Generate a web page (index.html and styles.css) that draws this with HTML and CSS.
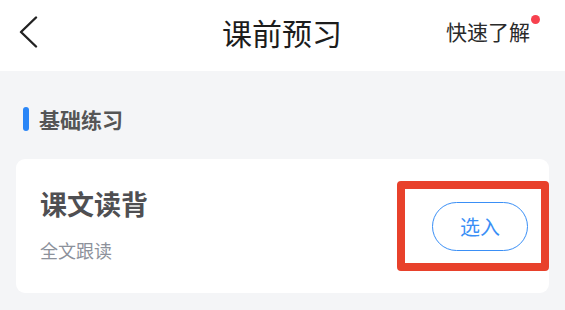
FILE: index.html
```html
<!DOCTYPE html>
<html lang="zh">
<head>
<meta charset="utf-8">
<link rel="stylesheet" href="styles.css">
</head>
<body>
<div class="page">
  <header class="nav">
    <div class="nav-back">
      <svg width="20" height="32" viewBox="0 0 20 32"><path d="M17 1.5 L2 16 L17 30.5" fill="none" stroke="#222" stroke-width="2.4" stroke-linecap="round" stroke-linejoin="round"/></svg>
    </div>
    <div class="nav-title">课前预习</div>
    <div class="nav-right"><span class="nav-link">快速了解</span><span class="dot"></span></div>
  </header>
  <main class="content">
    <div class="section-title"><span class="bar"></span><span>基础练习</span></div>
    <div class="card">
      <div class="card-text">
        <div class="card-title">课文读背</div>
        <div class="card-sub">全文跟读</div>
      </div>
      <div class="action">
        <button class="btn">选入</button>
        <div class="highlight"></div>
      </div>
    </div>
  </main>
</div>
</body>
</html>
```
FILE: styles.css
```css
* { box-sizing: border-box; }
html, body { margin: 0; padding: 0; }
body {
  width: 565px;
  height: 310px;
  overflow: hidden;
  background: #f4f5f7;
  font-family: "Noto Sans CJK SC", "Noto Sans", sans-serif;
}
.page { width: 565px; }
.nav {
  height: 71px;
  background: #fff;
  display: grid;
  grid-template-columns: 1fr auto 1fr;
  align-items: center;
  padding: 0 20px 0 19px;
}
.nav-back { display: flex; align-items: center; height: 32px; margin-top: -8px; }
.nav-title {
  font-size: 30px;
  line-height: 40px;
  color: #1c1c1c;
  letter-spacing: 0;
  margin-top: -7px;
}
.nav-right {
  justify-self: end;
  position: relative;
  padding-right: 15px;
  margin-top: -8px;
  line-height: 30px;
}
.nav-link { font-size: 21px; color: #2a2a2a; }
.dot {
  position: absolute;
  right: 5px;
  top: -1px;
  width: 9px;
  height: 9px;
  border-radius: 50%;
  background: #f7414e;
}
.content { padding: 36px 16px 0 16px; }
.section-title {
  display: flex;
  align-items: center;
  gap: 10px;
  padding-left: 7px;
  font-size: 21px;
  font-weight: 700;
  color: #555;
  height: 24px;
}
.bar {
  width: 6px;
  height: 24px;
  border-radius: 3px;
  background: #2a86f7;
}
.card {
  margin-top: 28px;
  background: #fff;
  border-radius: 9px;
  height: 134px;
  display: flex;
  align-items: center;
  justify-content: space-between;
  padding: 0 21px 0 24px;
}
.card-text { align-self: flex-start; padding-top: 27px; }
.card-title {
  font-size: 27px;
  font-weight: 700;
  color: #4f4f52;
  line-height: 36px;
}
.card-sub {
  margin-top: 15px;
  font-size: 18px;
  color: #8c919b;
  line-height: 26px;
}
.action { position: relative; }
.btn {
  width: 96px;
  height: 49px;
  border: 1.5px solid #3a8ff6;
  border-radius: 25px;
  background: #fff;
  color: #3a8ff6;
  font-family: inherit;
  font-size: 20px;
  padding: 0;
  display: flex;
  align-items: center;
  justify-content: center;
}
.highlight {
  position: absolute;
  left: -35px;
  top: -21px;
  width: 152px;
  height: 90px;
  border: 8.5px solid #e8412b;
  border-radius: 4px;
  pointer-events: none;
}
```
